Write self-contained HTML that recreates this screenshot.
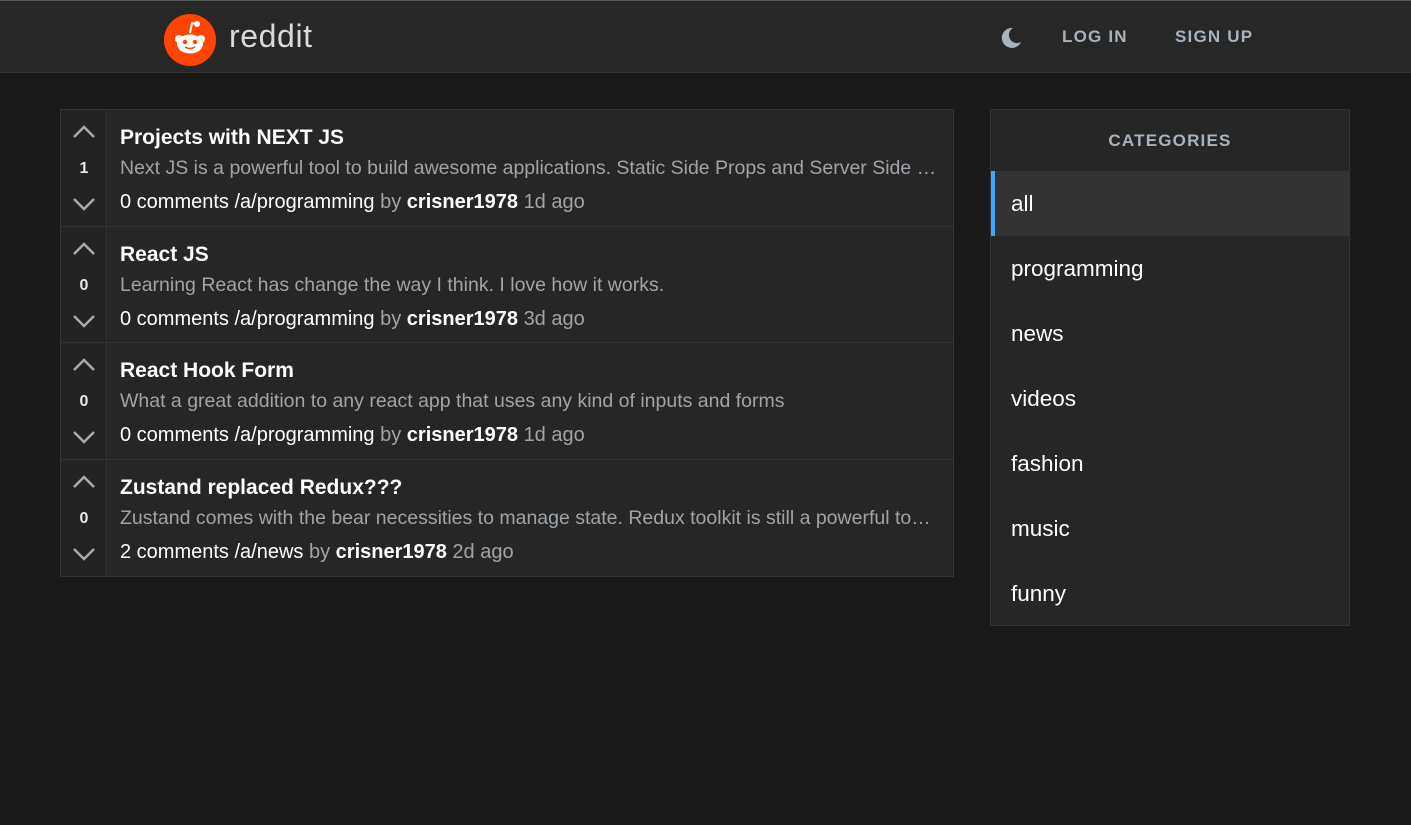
<!DOCTYPE html>
<html><head><meta charset="utf-8"><style>
*{box-sizing:border-box;margin:0;padding:0}
body{width:1411px;height:825px;background:#1a1a1a;font-family:"Liberation Sans",sans-serif;color:#d7dadc;overflow:hidden}
.hdr{position:absolute;top:0;left:0;width:1411px;height:73px;background:#272727;border-top:1px solid #555;border-bottom:1px solid #343434}
.logo{position:absolute;left:164px;top:13px;width:52px;height:52px;border-radius:50%;background:#ff4500}
.word{position:absolute;left:229px;top:17px;font-size:32px;color:#d7dadc;letter-spacing:0.6px}
.nav{position:absolute;top:26px;font-size:17px;font-weight:bold;letter-spacing:1.2px;color:#a8b3bd}
.list{position:absolute;left:60px;top:109px;width:894px;border:1px solid #343434;background:#262626}
.post{height:116.5px;border-bottom:1px solid #343434;position:relative}
.post:last-child{border-bottom:none}
.vote{position:absolute;left:0;top:0;width:46px;height:100%;border-right:1px solid #343434;background:#232323}
.vote svg{position:absolute;left:11px}
.score{position:absolute;width:46px;text-align:center;top:50px;font-size:16px;font-weight:bold;color:#e8e8e8}
.c{position:absolute;left:59px;right:16px}
.t{top:16px;font-size:21px;font-weight:bold;color:#fff}
.d{top:47px;font-size:19.5px;color:#9fa4a8;white-space:nowrap;overflow:hidden;text-overflow:ellipsis}
.m{top:81px;font-size:20px;color:#fff}
.m .g{color:#9fa4a8}
.side{position:absolute;left:990px;top:109px;width:360px;height:517px;border:1px solid #343434;background:#262626}
.cat{height:61px;text-align:center;line-height:62px;font-size:17px;font-weight:bold;letter-spacing:1.2px;color:#a8b3bd}
.it{height:65px;line-height:65px;padding-left:20px;font-size:22.5px;color:#fff}
.it.a{background:#333;border-left:4px solid #3ea6ff;padding-left:16px}
</style></head><body>
<div class="hdr">
<div class="logo"><svg width="52" height="52" viewBox="0 0 52 52">
<circle cx="33" cy="10" r="3" fill="#fff"/><path d="M26 19 L28 9 L33 10" stroke="#fff" stroke-width="2" fill="none"/>
<circle cx="15" cy="25" r="4" fill="#fff"/><circle cx="37" cy="25" r="4" fill="#fff"/>
<ellipse cx="26" cy="30" rx="13" ry="9.5" fill="#fff"/>
<circle cx="21" cy="28" r="2.2" fill="#ff4500"/><circle cx="31" cy="28" r="2.2" fill="#ff4500"/>
<path d="M21 33 Q26 36 31 33" stroke="#ff4500" stroke-width="1.5" fill="none"/></svg></div>
<div class="word">reddit</div>
<svg style="position:absolute;left:999px;top:25px" width="24" height="24" viewBox="0 0 24 24"><path d="M14 2 A10 10 0 1 0 22 16 A8 8 0 0 1 14 2Z" fill="#a8b3bd"/></svg>
<div class="nav" style="left:1062px">LOG IN</div>
<div class="nav" style="left:1175px">SIGN UP</div>
</div>
<div class="list">
<div class="post"><div class="vote"><svg style="top:14px" width="24" height="16"><path d="M2 13 L12 3 L22 13" stroke="#aaa" stroke-width="2.5" fill="none"/></svg><div class="score">1</div><svg style="top:86px" width="24" height="16"><path d="M2 3 L12 13 L22 3" stroke="#aaa" stroke-width="2.5" fill="none"/></svg></div>
<div class="c t">Projects with NEXT JS</div><div class="c d">Next JS is a powerful tool to build awesome applications. Static Side Props and Server Side Props make it great</div><div class="c m">0 comments /a/programming <span class="g">by</span> <b>crisner1978</b> <span class="g">1d ago</span></div></div>
<div class="post"><div class="vote"><svg style="top:14px" width="24" height="16"><path d="M2 13 L12 3 L22 13" stroke="#aaa" stroke-width="2.5" fill="none"/></svg><div class="score">0</div><svg style="top:86px" width="24" height="16"><path d="M2 3 L12 13 L22 3" stroke="#aaa" stroke-width="2.5" fill="none"/></svg></div>
<div class="c t">React JS</div><div class="c d">Learning React has change the way I think. I love how it works.</div><div class="c m">0 comments /a/programming <span class="g">by</span> <b>crisner1978</b> <span class="g">3d ago</span></div></div>
<div class="post"><div class="vote"><svg style="top:14px" width="24" height="16"><path d="M2 13 L12 3 L22 13" stroke="#aaa" stroke-width="2.5" fill="none"/></svg><div class="score">0</div><svg style="top:86px" width="24" height="16"><path d="M2 3 L12 13 L22 3" stroke="#aaa" stroke-width="2.5" fill="none"/></svg></div>
<div class="c t">React Hook Form</div><div class="c d">What a great addition to any react app that uses any kind of inputs and forms</div><div class="c m">0 comments /a/programming <span class="g">by</span> <b>crisner1978</b> <span class="g">1d ago</span></div></div>
<div class="post"><div class="vote"><svg style="top:14px" width="24" height="16"><path d="M2 13 L12 3 L22 13" stroke="#aaa" stroke-width="2.5" fill="none"/></svg><div class="score">0</div><svg style="top:86px" width="24" height="16"><path d="M2 3 L12 13 L22 3" stroke="#aaa" stroke-width="2.5" fill="none"/></svg></div>
<div class="c t">Zustand replaced Redux???</div><div class="c d">Zustand comes with the bear necessities to manage state. Redux toolkit is still a powerful tool though</div><div class="c m">2 comments /a/news <span class="g">by</span> <b>crisner1978</b> <span class="g">2d ago</span></div></div>
</div>
<div class="side">
<div class="cat">CATEGORIES</div>
<div class="it a">all</div><div class="it">programming</div><div class="it">news</div><div class="it">videos</div><div class="it">fashion</div><div class="it">music</div><div class="it">funny</div>
</div>
</body></html>
